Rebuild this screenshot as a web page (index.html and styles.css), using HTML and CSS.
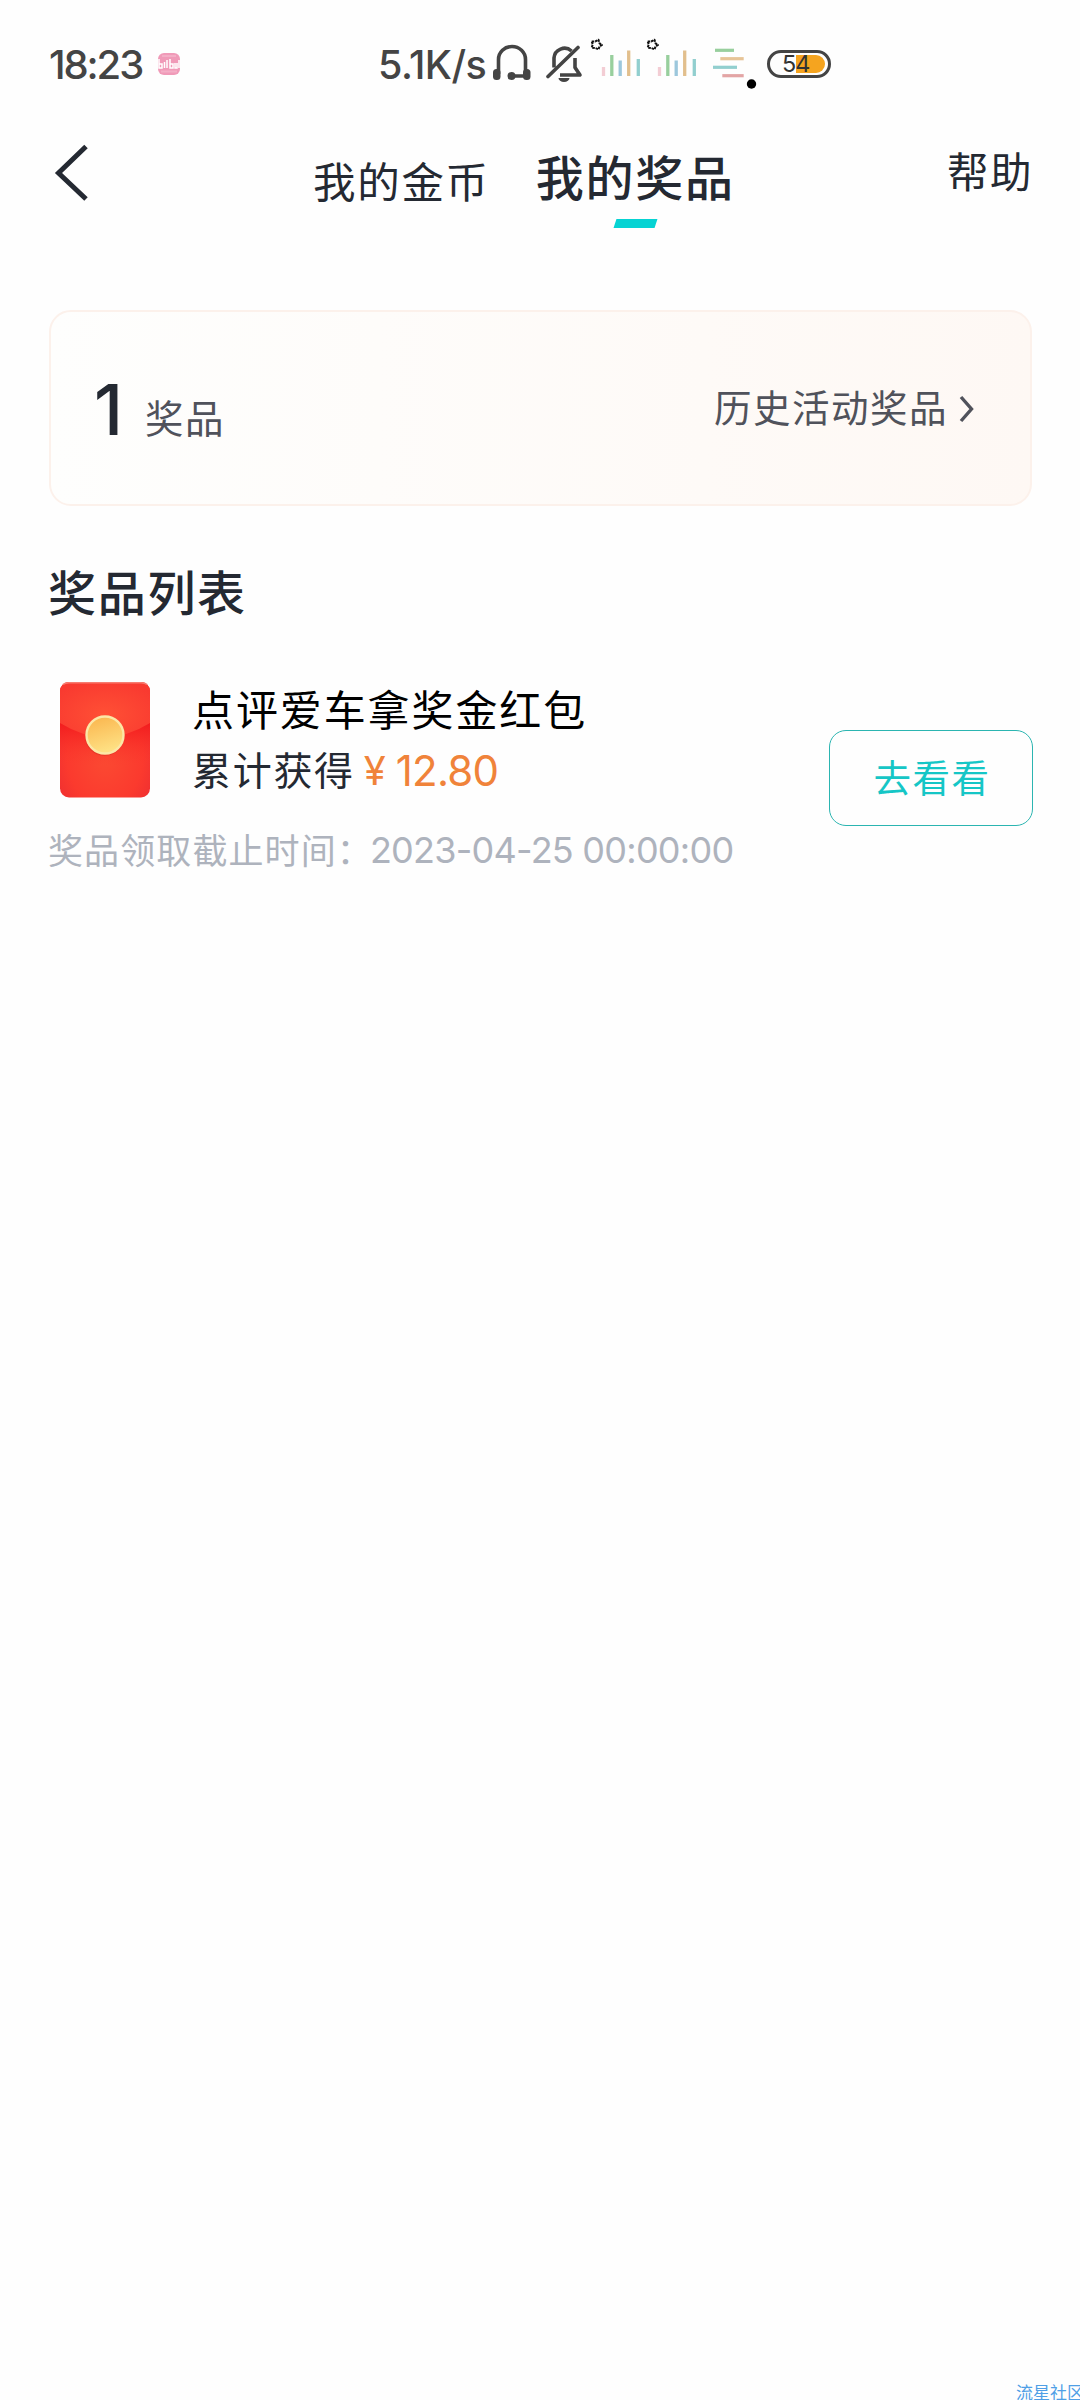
FILE: index.html
```html
<!DOCTYPE html>
<html lang="zh-CN">
<head>
<meta charset="utf-8">
<title>我的奖品</title>
<link rel="stylesheet" href="styles.css">
</head>
<body>
<div class="screen">
  <div class="status">
    <span class="clock">18:23</span>
    <svg class="app-badge" width="24" height="24" viewBox="0 0 24 24">
      <rect x="1" y="1" width="22" height="22" rx="6" fill="#f09ab8"/>
      <path d="M5 4h14M4 19.500h16" stroke="#f3aec6" stroke-width="2"/>
      <path d="M2 7v9h3v-4H2M7.500 10v6M10 8v8M13 7v9h3v-4h-3M18 11v5h2v-5M22 8v8" fill="none" stroke="#fff" stroke-width="1.500"/>
    </svg>
    <span class="speed">5.1K/s</span>
    <svg class="headset" width="40" height="38" viewBox="0 0 40 38">
      <path d="M6.500 30V15.500a13.500 13 0 0 1 27 0V30M20 32h13" fill="none" stroke="#444" stroke-width="3.600"/>
      <rect x="1" y="25" width="7.500" height="11" rx="3.500" fill="#444"/><rect x="31" y="25" width="7.500" height="11" rx="3.500" fill="#444"/>
      <circle cx="19.500" cy="32" r="4" fill="#444"/>
    </svg>
    <svg class="bell" width="38" height="40" viewBox="0 0 38 40">
      <path d="M8 23.500V14A10.500 10.500 0 0 1 25.500 7M29 14v9.500l5 7.500H14" fill="none" stroke="#444" stroke-width="3.600" stroke-linejoin="round"/>
      <path d="M2 32.500L32 3.500" stroke="#444" stroke-width="3.600" stroke-linecap="round"/>
      <path d="M12.500 34h11a5.500 4 0 0 1-11 0z" fill="#444"/>
    </svg>
    <svg class="chart chart-first" width="56" height="42" viewBox="0 0 56 42">
      <path d="M2.700 3.400H6.300L9.500 1.700 10.500 5.300 13 7 10.500 8.500 9.500 11.300 6.200 10 2.700 9.600 3.800 6.500z" fill="none" stroke="#111" stroke-width="2" stroke-linejoin="round" stroke-dasharray="2.600 .8"/>
      <path d="M14.500 29v9" stroke="#f3cdd4" stroke-width="3.300"/><path d="M22.800 17v21" stroke="#98cf9d" stroke-width="3.300"/><path d="M31.200 22.500v15.500" stroke="#9cc7dc" stroke-width="3.300"/><path d="M39.700 12.500V38" stroke="#e2bf8d" stroke-width="3.300"/><path d="M49.300 21v17" stroke="#92cfcf" stroke-width="3.300"/>
    </svg>
    <svg class="chart" width="56" height="42" viewBox="0 0 56 42">
      <path d="M2.700 3.400H6.300L9.500 1.700 10.500 5.300 13 7 10.500 8.500 9.500 11.300 6.200 10 2.700 9.600 3.800 6.500z" fill="none" stroke="#111" stroke-width="2" stroke-linejoin="round" stroke-dasharray="2.600 .8"/>
      <path d="M14.500 29v9" stroke="#f3cdd4" stroke-width="3.300"/><path d="M22.800 17v21" stroke="#98cf9d" stroke-width="3.300"/><path d="M31.200 22.500v15.500" stroke="#9cc7dc" stroke-width="3.300"/><path d="M39.700 12.500V38" stroke="#e2bf8d" stroke-width="3.300"/><path d="M49.300 21v17" stroke="#92cfcf" stroke-width="3.300"/>
    </svg>
    <svg class="lines" width="46" height="44" viewBox="0 0 46 44">
      <path d="M4 5.300h19" stroke="#98cf9d" stroke-width="3.200"/><path d="M9.300 13.700h23.400" stroke="#e7c497" stroke-width="3.200"/><path d="M2 22.300h24" stroke="#92cfcf" stroke-width="3.200"/><path d="M11.300 30.700h21.400" stroke="#e3a5a5" stroke-width="3.200"/>
      <circle cx="40.500" cy="39" r="4.700" fill="#000"/>
    </svg>
    <div class="battery"><span class="battery-level"></span><span class="battery-text">54</span></div>
  </div>

  <header class="header">
    <svg class="back" width="36" height="58" viewBox="0 0 36 58"><path d="M33 2.500L5.500 29 33 55" fill="none" stroke="#242932" stroke-width="5"/></svg>
    <span class="tab">我的金币</span>
    <div class="tab-active"><span class="tab-label">我的奖品</span><span class="indicator"></span></div>
    <span class="help">帮助</span>
  </header>

  <section class="summary">
    <span class="count">1</span>
    <span class="unit">奖品</span>
    <span class="history">历史活动奖品</span>
    <svg class="chevron" width="16" height="28" viewBox="0 0 16 28"><path d="M2 2l10.500 12L2 26" fill="none" stroke="#50525b" stroke-width="3.400"/></svg>
  </section>

  <h2 class="title">奖品列表</h2>

  <section class="prize">
    <div class="prize-info">
      <div class="prize-main">
        <svg class="packet" width="92" height="118" viewBox="0 0 92 118">
          <defs>
            <radialGradient id="body" cx=".5" cy=".65" r=".6"><stop offset="0" stop-color="#fb4a32"/><stop offset=".7" stop-color="#fb3a2e"/><stop offset="1" stop-color="#f03030"/></radialGradient>
            <linearGradient id="shade" x1="0" y1="0" x2="0" y2="1"><stop offset="0" stop-color="#f21a1c"/><stop offset="1" stop-color="#fb3a2e" stop-opacity="0"/></linearGradient>
            <radialGradient id="flap" cx=".5" cy=".6" r=".65"><stop offset="0" stop-color="#ff5035"/><stop offset="1" stop-color="#f93a30"/></radialGradient>
            <linearGradient id="coin" x1="0" y1="0" x2=".3" y2="1"><stop offset="0" stop-color="#fab34b"/><stop offset="1" stop-color="#fee083"/></linearGradient>
          </defs>
          <rect x="1" y="1" width="90" height="115.500" rx="9" fill="url(#body)"/>
          <path d="M1 40H91V85H1Z" fill="url(#shade)"/>
          <path d="M1 42V10a9 9 0 0 1 9-9h72a9 9 0 0 1 9 9v32Q46 70 1 42z" fill="url(#flap)"/>
          <path d="M4 3.500Q6 1.700 10 1.700H82Q86 1.700 88 3.500" fill="none" stroke="#f77c70" stroke-width="1.600"/>
          <circle cx="45.500" cy="55.500" r="19.500" fill="#d22a20" opacity=".4"/>
          <circle cx="46" cy="54" r="18.500" fill="url(#coin)" stroke="#fce7a6" stroke-width="2.400"/>
        </svg>
        <div class="prize-text">
          <div class="prize-name">点评爱车拿奖金红包</div>
          <div class="prize-sum">累计获得<span class="yen">¥</span><span class="amount">12.80</span></div>
        </div>
      </div>
      <div class="deadline">奖品领取截止时间：<span class="date">2023-04-25 00:00:00</span></div>
    </div>
    <button class="go">去看看</button>
  </section>

  <footer class="mark">流星社区</footer>
</div>
</body>
</html>
```
FILE: styles.css
```css
* { box-sizing: border-box; }
body { margin: 0; background: #fefefe; font-family: "Noto Sans CJK SC", sans-serif; color: #242932; }
svg { display: block; flex: none; }
.screen { width: 1080px; height: 2400px; display: flex; flex-direction: column; overflow: hidden; background: #fefefe; white-space: nowrap; }

.status { height: 130px; flex: none; display: flex; align-items: flex-start; padding-left: 49px; font-family: Inter, sans-serif; font-weight: 500; color: #444; }
.clock { width: 108px; margin-top: 41px; font-size: 40px; line-height: 48px; letter-spacing: -2.100px; }
.app-badge { margin-top: 52px; }
.speed { width: 113px; margin-left: 197px; margin-top: 41px; font-size: 39.500px; line-height: 48px; letter-spacing: -.5px; }
.headset { margin-left: 1px; margin-top: 44px; }
.bell { margin-left: 14px; margin-top: 44px; }
.chart { margin-top: 38px; }
.chart-first { margin-left: 5px; }
.lines { margin-left: 10px; margin-top: 45px; }
.battery { position: relative; margin: 50px 0 0 10px; width: 64px; height: 28px; border: 3px solid #444; border-radius: 14px; display: flex; align-items: center; }
.battery-level { position: absolute; left: 26px; top: 2px; width: 29px; height: 18px; border-radius: 0 9px 9px 0; background: #f5a41f; }
.battery-text { position: relative; margin-left: 12px; font-size: 23.500px; line-height: 24px; letter-spacing: -1px; font-weight: 400; color: #333; }

.header { height: 180px; flex: none; display: flex; align-items: flex-start; padding: 0 46px 0 53px; }
.back { margin-top: 14px; }
.tab { margin-left: 224px; margin-top: 20px; font-size: 42.500px; line-height: 60px; letter-spacing: 1.700px; }
.tab-active { margin-left: 46px; margin-top: 15px; display: flex; flex-direction: column; align-items: center; }
.tab-label { font-size: 48px; line-height: 60px; letter-spacing: 1.700px; font-weight: 500; }
.indicator { width: 41px; height: 9px; margin-top: 14px; background: #06d3d3; transform: skewX(-18deg); }
.help { margin-left: auto; margin-top: 10px; margin-right: 1px; font-size: 41.500px; line-height: 60px; letter-spacing: 1.500px; }

.summary { height: 196px; flex: none; margin: 0 48px 0 49px; border: 2px solid #fcf1eb; border-radius: 22px; background: linear-gradient(90deg, #fefefd, #fef8f4); display: flex; align-items: flex-start; color: #50525b; }
.count { margin-left: 43px; margin-top: 56px; width: 51px; font-family: Inter, sans-serif; font-weight: 500; font-size: 70px; line-height: 84px; color: #242932; }
.unit { margin-top: 74px; font-size: 38.500px; line-height: 60px; letter-spacing: 1.500px; }
.history { margin-left: auto; margin-top: 64px; font-size: 37.500px; line-height: 60px; letter-spacing: 1.500px; }
.chevron { margin-left: 11px; margin-right: 55px; margin-top: 83px; }

.title { margin: 54px 0 0 48px; font-size: 48px; line-height: 60px; letter-spacing: 1.700px; font-weight: 500; }

.prize { margin: 61px 47px 0 48px; display: flex; align-items: flex-start; justify-content: space-between; }
.prize-main { display: flex; align-items: flex-start; }
.packet { margin: 0 0 0 11px; }
.prize-text { margin-left: 41px; margin-top: -3px; }
.prize-name { font-size: 42px; line-height: 60px; letter-spacing: 1.900px; color: #000; }
.prize-sum { height: 60px; display: flex; font-size: 39px; line-height: 60px; letter-spacing: 1.700px; }
.yen, .amount { font-family: Inter, sans-serif; color: #f0833a; font-size: 42px; letter-spacing: -.8px; margin-top: 3px; }
.yen { width: 32px; margin-left: 9px; font-size: 40px; }
.deadline { display: flex; margin-top: 20px; font-size: 35px; line-height: 60px; letter-spacing: 1.100px; color: #aeb3bd; }
.date { margin-top: 1px; margin-left: -3px; font-family: Inter, sans-serif; font-size: 36px; letter-spacing: -.75px; }
.go { width: 204px; height: 96px; margin: 49px 0 0; padding: 0 0 5px 2px; border: 1px solid #2bb5b1; border-radius: 17px; background: transparent; font: 37.500px/60px "Noto Sans CJK SC", sans-serif; letter-spacing: 1.500px; color: #15c6c6; }

.mark { margin-top: auto; align-self: flex-end; height: 18px; margin-right: -4px; font-size: 17px; line-height: 20px; color: #4f9fe6; }
```
